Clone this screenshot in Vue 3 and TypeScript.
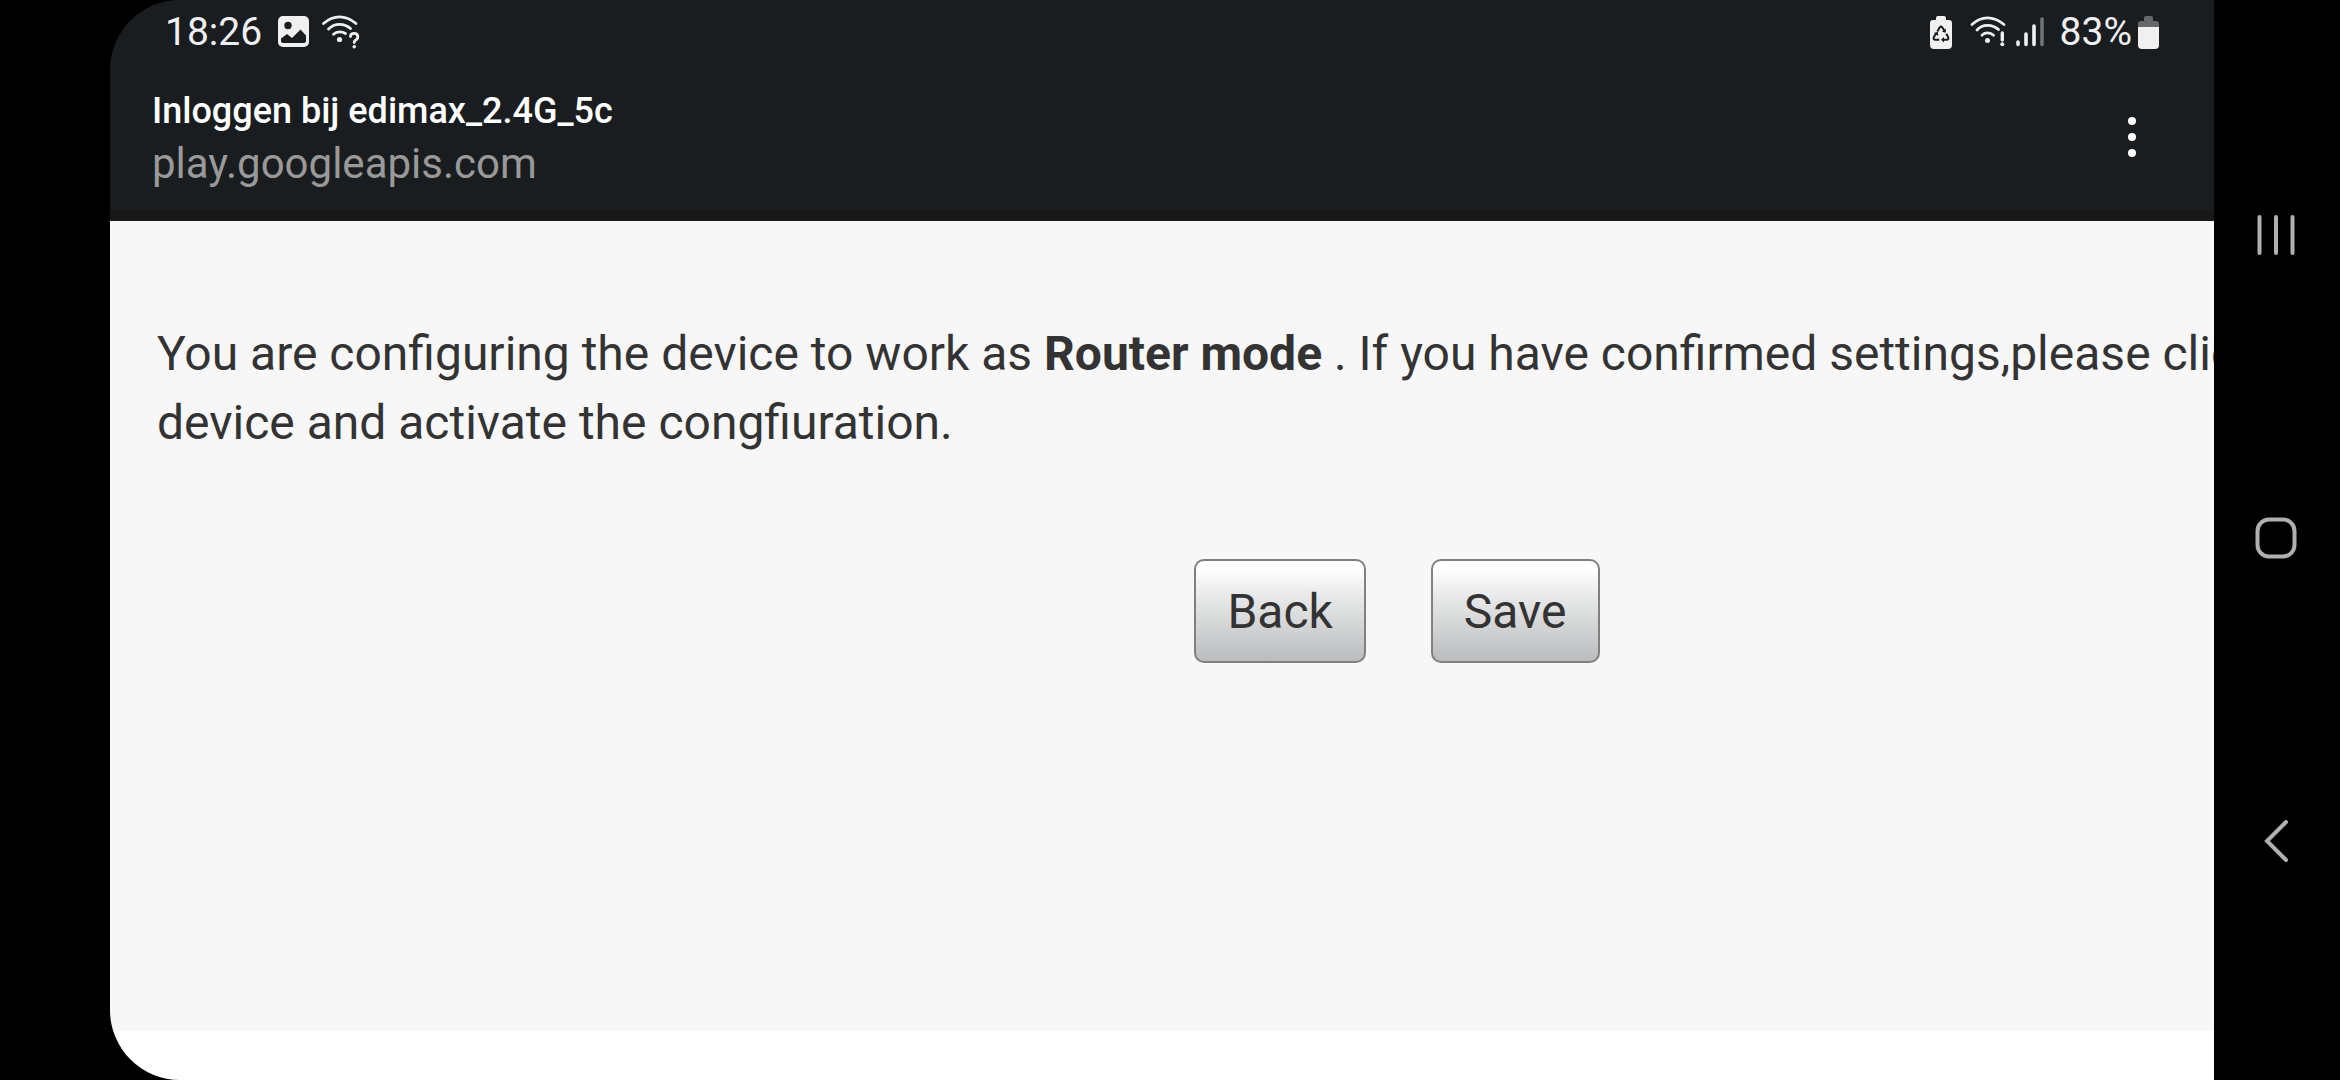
<script setup lang="ts">
const clock = '18:26'
const batteryLevel = '83%'
const network = 'edimax_2.4G_5c'
const host = 'play.googleapis.com'
const mode = 'Router mode'
</script>

<template>
  <div class="device">
    <div class="screen">
      <header class="top">
        <div class="status">
          <div class="status-left">
            <span>{{ clock }}</span>
            <svg class="picture" width="32" height="32" viewBox="0 0 32 32" aria-hidden="true">
              <rect width="31" height="31" rx="5" fill="#f0f0f0" />
              <circle cx="10" cy="9.500" r="3.700" fill="#191d1f" />
              <path d="M3 22.500L9 18L14 22L22.500 13.500L28 19.500V25Q28 27 26 27H5Q3 27 3 25Z" fill="#191d1f" />
            </svg>
            <svg class="wifi" width="40" height="34" viewBox="0 0 40 34" aria-hidden="true">
              <g fill="none" stroke="#f0f0f0" stroke-width="2.800" stroke-linecap="round">
                <path d="M2.500 8.500Q10 1.800 18.500 1.800T35 8.500" />
                <path d="M7.500 14Q12 9.300 18.500 9.300Q25 9.300 29.500 13.500" />
                <path d="M12.500 19.200Q15 16.800 18.500 16.800Q22 16.800 24.500 18.500" />
                <path d="M29.500 21.500Q29.500 18.300 33 18.300Q36.800 18.300 36.800 21.700Q36.800 24 34.500 25.200Q33.200 26 33.200 27.600" />
              </g>
              <circle cx="18.500" cy="24.500" r="2.600" fill="#f0f0f0" />
              <circle cx="33.200" cy="31.700" r="1.700" fill="#f0f0f0" />
            </svg>
          </div>
          <div class="status-right">
            <svg class="saver" width="22" height="33" viewBox="0 0 22 33" aria-hidden="true">
              <path d="M6 4V2Q6 0 8 0H14Q16 0 16 2V4H19Q22 4 22 7V29Q22 33 18 33H4Q0 33 0 29V7Q0 4 3 4Z" fill="#f0f0f0" />
              <g fill="none" stroke="#191d1f" stroke-width="2">
                <path d="M7.300 15.500L9.800 11.300Q11 9.700 12.200 11.300L14.500 15" />
                <path d="M16.300 17.700L18.200 21.200Q19 23.800 16.500 23.800H12.500" />
                <path d="M9.300 23.800H5.500Q3 23.800 3.800 21.200L6 17.500" />
              </g>
              <path d="M15.800 12.500V16.800L12 15.800ZM14 21V26.600L11 23.800ZM3.800 17L7.800 15.800L8.300 20Z" fill="#191d1f" />
            </svg>
            <svg class="wifi-alert" width="36" height="32" viewBox="0 0 36 32" aria-hidden="true">
              <g fill="none" stroke="#f0f0f0" stroke-width="2.800" stroke-linecap="round">
                <path d="M2 8.500Q9 1.800 17.500 1.800T34 8.500" />
                <path d="M7 14Q11 9.300 17.500 9.300Q24 9.300 28.500 13.500" />
                <path d="M12 19.200Q14 16.800 17.500 16.800Q21 16.800 23.500 19.200" />
              </g>
              <circle cx="17.500" cy="24.500" r="2.500" fill="#f0f0f0" />
              <path d="M32.300 17V24" stroke="#f0f0f0" stroke-width="3.400" stroke-linecap="round" />
              <circle cx="32.300" cy="28.300" r="2" fill="#f0f0f0" />
            </svg>
            <svg class="signal" width="28" height="30" viewBox="0 0 28 30" aria-hidden="true">
              <g stroke="#f0f0f0" stroke-width="3.600" stroke-linecap="round">
                <path d="M2 25V27.500M10 17V27.500M18 9V27.500" />
                <path d="M26 2V27.500" stroke="#707375" />
              </g>
            </svg>
            <span>{{ batteryLevel }}</span>
            <svg class="battery" width="22" height="33" viewBox="0 0 22 33" aria-hidden="true">
              <path d="M6 5V2Q6 0 8 0H13Q15 0 15 2V5H18Q21 5 21 8V12H0V8Q0 5 3 5Z" fill="#66686a" />
              <path d="M0 11H21V29Q21 33 17 33H4Q0 33 0 29Z" fill="#f0f0f0" />
            </svg>
          </div>
        </div>
        <div class="toolbar">
          <div class="titles">
            <h1>Inloggen bij {{ network }}</h1>
            <p>{{ host }}</p>
          </div>
          <button class="menu" type="button" aria-label="Menu">
            <i></i><i></i><i></i>
          </button>
        </div>
      </header>

      <main class="page">
        <div class="content">
          <p class="message">
            You are configuring the device to work as <b>{{ mode }}</b> . If you have confirmed settings,please click<br />
            device and activate the congfiuration.
          </p>
          <div class="actions">
            <button class="action" type="button">Back</button>
            <button class="action" type="button">Save</button>
          </div>
        </div>
      </main>
      <div class="page-end"></div>
    </div>

    <nav class="navbar">
      <button type="button" aria-label="Recents">
        <svg width="42" height="42" viewBox="0 0 42 42">
          <path d="M4.500 3V39M21 3V39M37.500 3V39" stroke="#b0b0b0" stroke-width="4" stroke-linecap="round" />
        </svg>
      </button>
      <button type="button" aria-label="Home">
        <svg width="42" height="42" viewBox="0 0 42 42">
          <rect x="2.500" y="2.500" width="37" height="37" rx="11.500" fill="none" stroke="#b0b0b0" stroke-width="4" />
        </svg>
      </button>
      <button type="button" aria-label="Back">
        <svg width="42" height="42" viewBox="0 0 42 42">
          <path d="M31 2L12 21L31 40" fill="none" stroke="#b0b0b0" stroke-width="4" stroke-linecap="round" />
        </svg>
      </button>
    </nav>
  </div>
</template>

<style>
body {
  margin: 0;
  background: #000;
}
</style>

<style scoped>
.device {
  display: flex;
  min-height: 100vh;
  padding-left: 110px;
  box-sizing: border-box;
  background: #000;
  font-family: Roboto, "Liberation Sans", sans-serif;
}

button {
  margin: 0;
  padding: 0;
  border: 0;
  background: none;
  font: inherit;
}

svg {
  display: block;
  flex: none;
}

.screen {
  flex: 1;
  min-width: 0;
  display: flex;
  flex-direction: column;
  overflow: hidden;
  border-radius: 70px 0 0 70px;
}

.top {
  background: #191d1f;
  border-bottom: 11px solid #181818;
}

.status {
  display: flex;
  justify-content: space-between;
  height: 64px;
  padding: 0 54px 0 55px;
  font-size: 39px;
  line-height: 64px;
  color: #f0f0f0;
}

.status-left,
.status-right {
  display: flex;
  align-items: center;
}

.picture {
  margin-left: 16px;
}

.wifi {
  margin-left: 11px;
}

.wifi-alert {
  margin-left: 18px;
}

.signal {
  margin: 0 16px 0 10px;
}

.battery {
  margin-left: 6px;
}

.toolbar {
  display: flex;
  justify-content: space-between;
  align-items: center;
  height: 146px;
  padding: 0 58px 0 42px;
}

.titles {
  padding-top: 8px;
}

.titles h1 {
  margin: 0;
  font-size: 36px;
  line-height: 46px;
  font-weight: 500;
  color: #fff;
}

.titles p {
  margin: 0;
  font-size: 42px;
  line-height: 60px;
  color: #999;
}

.menu {
  display: flex;
  flex-direction: column;
  align-items: center;
  gap: 8px;
  width: 48px;
}

.menu i {
  width: 8px;
  height: 8px;
  border-radius: 50%;
  background: #fff;
}

.page {
  flex: 1;
  overflow: hidden;
  background: #f7f7f7;
}

.content {
  box-sizing: border-box;
  width: 122%;
  padding: 98px 40px 40px 47px;
  color: #333;
  font-size: 48px;
  line-height: 69px;
}

.message {
  margin: 0;
  white-space: nowrap;
}

.actions {
  display: flex;
  justify-content: center;
  gap: 65px;
  margin-top: 102px;
}

.action {
  height: 104px;
  padding: 0 31px;
  border: 2px solid #808080;
  border-radius: 10px;
  background: linear-gradient(#fff, #fff 8%, #e8e9e9 35%, #bbbcbe);
  color: #333;
}

.page-end {
  height: 49px;
  background: #fff;
}

.navbar {
  display: flex;
  flex-direction: column;
  width: 126px;
  padding: 84px 2px 88px 0;
  box-sizing: border-box;
}

.navbar button {
  flex: 1;
  display: flex;
  align-items: center;
  justify-content: center;
}
</style>
